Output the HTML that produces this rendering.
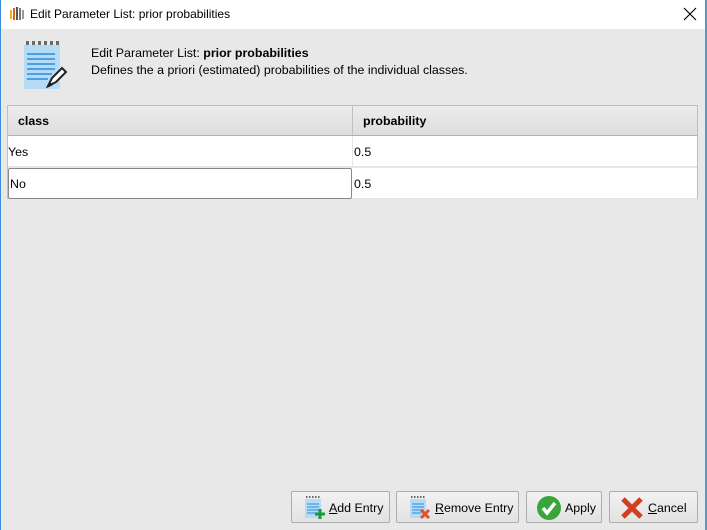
<!DOCTYPE html>
<html><head><style>
body{margin:0;width:707px;height:530px;overflow:hidden;font-family:"Liberation Sans",sans-serif;font-size:12.4px;color:#000;background:#e8e8e8;position:relative}
.tb{position:absolute;left:0;top:0;width:705px;height:29px;background:#fff}
.lb{position:absolute;left:0;top:0;width:1px;height:530px;background:#3c8ed8}
.rb{position:absolute;left:705px;top:0;width:2px;height:530px;background:#5b94c8}
.abs{position:absolute}
.tbl{position:absolute;left:7px;top:105px;width:691px;height:94px;border:1px solid #bdbdbd;border-bottom:none;box-sizing:border-box}
.hd{position:absolute;left:0;top:0;width:689px;height:30px;background:linear-gradient(#ececec,#dedede);border-bottom:1px solid #b0b0b0;box-sizing:border-box}
.row{position:absolute;left:0;width:689px;height:31px;background:#fff;border-bottom:1px solid #e4e4e4;box-sizing:border-box}
.btn{position:absolute;top:491px;height:32px;border:1px solid #adadad;border-radius:2px;background:linear-gradient(#f2f2f2,#e2e2e2);box-sizing:border-box;font-size:12.4px;line-height:32px}
.btn span{position:absolute;top:0}
</style></head><body>
<div class="tb"></div>
<div class="lb"></div><div class="rb"></div>
<svg class="abs" style="left:9px;top:6px" width="16" height="16"><rect x="1" y="4" width="2" height="9" fill="#f0b020"/><rect x="4" y="2" width="2" height="12" fill="#e06020"/><rect x="7" y="1" width="2" height="13" fill="#555"/><rect x="10" y="2" width="2" height="12" fill="#777"/><rect x="13" y="4" width="2" height="9" fill="#999"/></svg>
<div class="abs" style="left:30px;top:7px;font-size:12px">Edit Parameter List: prior probabilities</div>
<svg class="abs" style="left:683px;top:7px" width="14" height="14"><path d="M1 1L13 13M13 1L1 13" stroke="#000" stroke-width="1.2"/></svg>
<svg class="abs" style="left:22px;top:40px" width="46" height="50"><rect x="2" y="5" width="36" height="44" fill="#b6dcf5"/><g fill="#6a6a6a"><rect x="4" y="1" width="3" height="4"/><rect x="10" y="1" width="3" height="4"/><rect x="16" y="1" width="3" height="4"/><rect x="22" y="1" width="3" height="4"/><rect x="28" y="1" width="3" height="4"/><rect x="34" y="1" width="3" height="4"/></g><g stroke="#2a8ae0" stroke-width="1.5"><path d="M5 14H33M5 19H33M5 24H33M5 29H33M5 34H30M5 39H26"/></g><path d="M26 46L30 38L40 28L44 32L34 42Z" fill="#fff" stroke="#222" stroke-width="2"/><path d="M25 48L28 42L31 45Z" fill="#222"/></svg>
<div class="abs" style="left:91px;top:46px">Edit Parameter List: <b>prior probabilities</b></div>
<div class="abs" style="left:91px;top:63px">Defines the a priori (estimated) probabilities of the individual classes.</div>
<div class="tbl">
<div class="hd"><b class="abs" style="left:10px;top:8px">class</b><div class="abs" style="left:344px;top:0;width:1px;height:29px;background:#c0c0c0"></div><b class="abs" style="left:355px;top:8px">probability</b></div>
<div class="row" style="top:30px"><span class="abs" style="left:0;top:9px">Yes</span><div class="abs" style="left:344px;top:0;width:1px;height:31px;background:#e4e4e4"></div><span class="abs" style="left:346px;top:9px">0.5</span></div>
<div class="row" style="top:62px"><div class="abs" style="left:0;top:0;width:344px;height:31px;border:1px solid #888;border-radius:2px;box-sizing:border-box"></div><span class="abs" style="left:2px;top:9px">No</span><span class="abs" style="left:346px;top:9px">0.5</span></div>
</div>
<div class="btn" style="left:291px;width:99px"><svg class="abs" style="left:12px;top:4px" width="22" height="24"><rect x="1" y="3" width="16" height="19" fill="#b6dcf5"/><path d="M3 8H15M3 11H15M3 14H15M3 17H12" stroke="#2a8ae0"/><path d="M2 1H16" stroke="#666" stroke-width="2" stroke-dasharray="1.5 1.5"/><path d="M16 13V23M11 18H21" stroke="#1a9a3a" stroke-width="3"/></svg><span style="left:37px"><u>A</u>dd Entry</span></div>
<div class="btn" style="left:396px;width:123px"><svg class="abs" style="left:12px;top:4px" width="22" height="24"><rect x="1" y="3" width="16" height="19" fill="#b6dcf5"/><path d="M3 8H15M3 11H15M3 14H15M3 17H12" stroke="#2a8ae0"/><path d="M2 1H16" stroke="#666" stroke-width="2" stroke-dasharray="1.5 1.5"/><path d="M12 14L20 22M20 14L12 22" stroke="#e05030" stroke-width="3"/></svg><span style="left:38px"><u>R</u>emove Entry</span></div>
<div class="btn" style="left:526px;width:76px"><svg class="abs" style="left:9px;top:3px" width="26" height="26"><circle cx="13" cy="13" r="12" fill="#3aa53a"/><path d="M7 13L11 18L19 8" stroke="#fff" stroke-width="3.5" fill="none"/></svg><span style="left:38px">Apply</span></div>
<div class="btn" style="left:609px;width:89px"><svg class="abs" style="left:10px;top:4px" width="24" height="24"><path d="M3 3L21 21M21 3L3 21" stroke="#d04020" stroke-width="5"/></svg><span style="left:38px"><u>C</u>ancel</span></div>
</body></html>
